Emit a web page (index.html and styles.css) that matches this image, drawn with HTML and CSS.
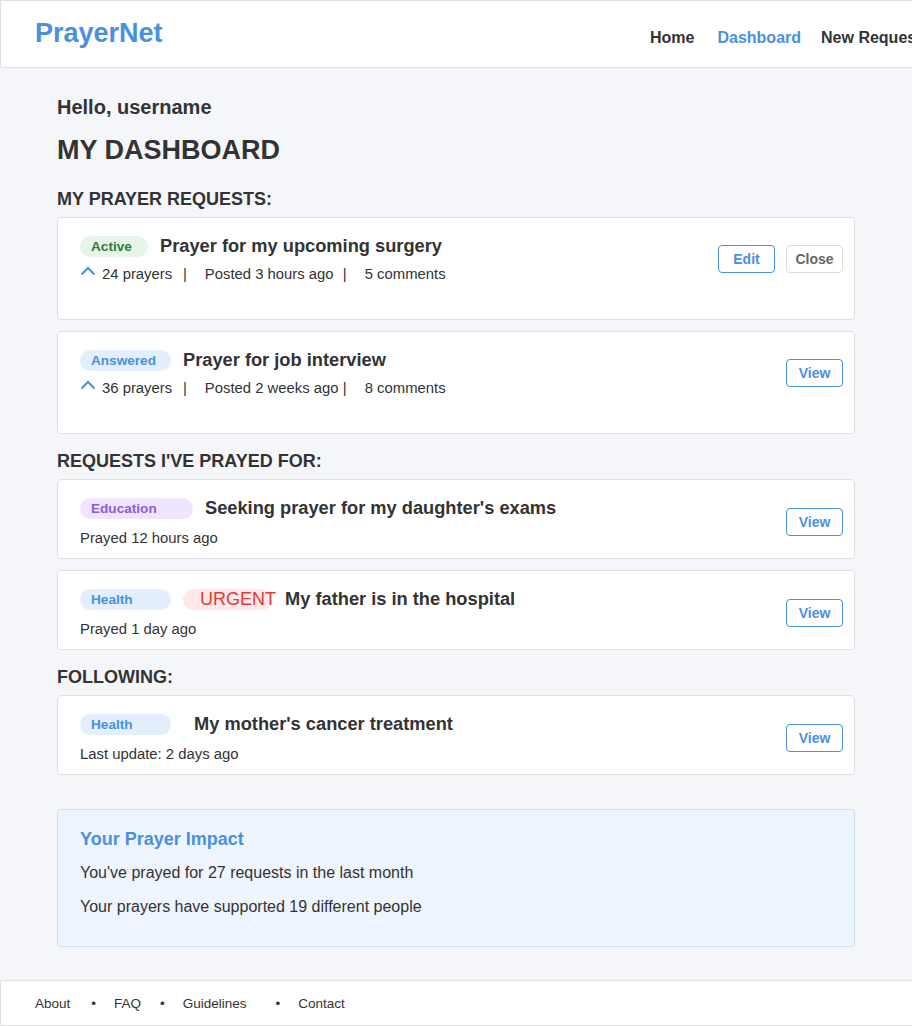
FILE: index.html
```html
<!DOCTYPE html>
<html lang="en">
<head>
<meta charset="utf-8">
<title>PrayerNet - Dashboard</title>
<link rel="stylesheet" href="styles.css">
</head>
<body>
<header class="site-header">
  <div class="logo">PrayerNet</div>
  <nav class="nav">
    <a class="nav-link" href="#">Home</a>
    <a class="nav-link nav-active" href="#">Dashboard</a>
    <a class="nav-link" href="#">New Request</a>
    <a class="nav-link" href="#">Browse</a>
    <a class="nav-link" href="#">Logout</a>
  </nav>
</header>

<main class="container">
  <h2 class="greeting">Hello, username</h2>
  <h1 class="page-title">MY DASHBOARD</h1>

  <h3 class="section-title first">MY PRAYER REQUESTS:</h3>
  <div class="card card-tall">
    <div class="card-info">
      <div class="title-row">
        <span class="badge badge-active">Active</span>
        <span class="card-title">Prayer for my upcoming surgery</span>
      </div>
      <div class="meta">
        <span class="seg seg-first"><svg class="chev" width="16" height="10" viewBox="0 0 16 10"><polyline points="1.5,8.5 8,2 14.5,8.5" fill="none" stroke="#4a90e2" stroke-width="2"/></svg>24 prayers</span>
        <span class="sep">|</span>
        <span class="seg seg-second">Posted 3 hours ago</span>
        <span class="sep">|</span>
        <span class="seg">5 comments</span>
      </div>
    </div>
    <div class="actions">
      <button class="btn btn-primary">Edit</button>
      <button class="btn btn-muted">Close</button>
    </div>
  </div>

  <div class="card card-tall">
    <div class="card-info">
      <div class="title-row">
        <span class="badge badge-answered">Answered</span>
        <span class="card-title">Prayer for job interview</span>
      </div>
      <div class="meta">
        <span class="seg seg-first"><svg class="chev" width="16" height="10" viewBox="0 0 16 10"><polyline points="1.5,8.5 8,2 14.5,8.5" fill="none" stroke="#4a90e2" stroke-width="2"/></svg>36 prayers</span>
        <span class="sep">|</span>
        <span class="seg seg-second">Posted 2 weeks ago</span>
        <span class="sep">|</span>
        <span class="seg">8 comments</span>
      </div>
    </div>
    <div class="actions">
      <button class="btn btn-primary">View</button>
    </div>
  </div>

  <h3 class="section-title">REQUESTS I'VE PRAYED FOR:</h3>
  <div class="card">
    <div class="card-info">
      <div class="title-row">
        <span class="badge badge-education">Education</span>
        <span class="card-title">Seeking prayer for my daughter's exams</span>
      </div>
      <div class="meta meta-plain">Prayed 12 hours ago</div>
    </div>
    <div class="actions">
      <button class="btn btn-primary">View</button>
    </div>
  </div>

  <div class="card">
    <div class="card-info">
      <div class="title-row">
        <span class="badge badge-health">Health</span>
        <span class="badge badge-urgent">URGENT</span>
        <span class="card-title title-after-urgent">My father is in the hospital</span>
      </div>
      <div class="meta meta-plain">Prayed 1 day ago</div>
    </div>
    <div class="actions">
      <button class="btn btn-primary">View</button>
    </div>
  </div>

  <h3 class="section-title">FOLLOWING:</h3>
  <div class="card">
    <div class="card-info">
      <div class="title-row">
        <span class="badge badge-health">Health</span>
        <span class="card-title title-wide-gap">My mother's cancer treatment</span>
      </div>
      <div class="meta meta-plain">Last update: 2 days ago</div>
    </div>
    <div class="actions">
      <button class="btn btn-primary">View</button>
    </div>
  </div>

  <section class="impact">
    <h4 class="impact-title">Your Prayer Impact</h4>
    <p class="impact-line">You've prayed for 27 requests in the last month</p>
    <p class="impact-line">Your prayers have supported 19 different people</p>
  </section>
</main>

<footer class="site-footer">
  <a class="foot-link foot-about" href="#">About</a>
  <span class="dot">•</span>
  <a class="foot-link" href="#">FAQ</a>
  <span class="dot">•</span>
  <a class="foot-link foot-guidelines" href="#">Guidelines</a>
  <span class="dot">•</span>
  <a class="foot-link" href="#">Contact</a>
</footer>
</body>
</html>
```

FILE: styles.css
```css
* { box-sizing: border-box; }

html, body {
  margin: 0;
  padding: 0;
  overflow-x: hidden;
}

body {
  background: #f5f6fa;
  color: #333333;
  font-family: "Liberation Sans", Arial, sans-serif;
}

a { text-decoration: none; }

/* Header */
.site-header {
  display: flex;
  align-items: center;
  height: 68px;
  background: #ffffff;
  border: 1px solid #e0e0e0;
  border-right: none;
  padding-left: 34px;
  overflow: hidden;
  white-space: nowrap;
}

.logo {
  flex: 0 0 615px;
  font-size: 27px;
  font-weight: bold;
  color: #4a90e2;
  margin-top: -1px;
}

.nav {
  display: flex;
  flex: 0 0 auto;
  padding-top: 7px;
}

.nav-link {
  font-size: 16px;
  font-weight: bold;
  color: #333333;
  margin-right: 23px;
}

.nav-link.nav-active {
  color: #4a90e2;
  margin-right: 20px;
}

/* Main */
.container {
  width: 798px;
  margin: 0 auto;
  padding-top: 27px;
}

.greeting {
  margin: 0;
  font-size: 20px;
  line-height: 24px;
  font-weight: bold;
}

.page-title {
  margin: 15px 0 0;
  font-size: 27px;
  line-height: 32px;
  font-weight: bold;
}

.section-title {
  margin: 17px 0 8px;
  font-size: 18px;
  line-height: 20px;
  font-weight: bold;
}

.section-title.first {
  margin-top: 23px;
}

/* Cards */
.card {
  display: flex;
  align-items: center;
  background: #ffffff;
  border: 1px solid #e0e0e0;
  border-radius: 4px;
  padding: 17px 11px 10px 22px;
  margin-bottom: 11px;
}

.card.card-tall {
  padding-bottom: 35px;
}

.card-info {
  flex: 1 1 auto;
}

.title-row {
  display: flex;
  align-items: center;
  height: 22px;
  white-space: nowrap;
}

.card-title {
  font-size: 18.25px;
  line-height: 22px;
  font-weight: bold;
  margin-left: 12px;
  color: #333333;
}

.card-title.title-after-urgent { margin-left: 13px; }
.card-title.title-wide-gap { margin-left: 23px; }

.badge {
  display: inline-block;
  height: 21px;
  line-height: 21px;
  border-radius: 11px;
  padding-left: 11px;
  font-size: 13.6px;
  font-weight: bold;
  white-space: nowrap;
}

.badge-active { width: 68px; background: #e6f4ea; color: #2e7d32; }
.badge-answered { width: 91px; background: #e3effd; color: #4a90e2; }
.badge-education { width: 113px; background: #efe5fd; color: #8e5bd6; }
.badge-health { width: 91px; background: #e3effd; color: #4a90e2; }

.badge-urgent {
  width: 89px;
  margin-left: 12px;
  background: #fde9e9;
  color: #e53935;
  font-size: 18px;
  font-weight: normal;
  padding-left: 17px;
  overflow: visible;
}

.meta {
  display: flex;
  align-items: center;
  margin-top: 7px;
  height: 20px;
  font-size: 14.85px;
  line-height: 20px;
  color: #333333;
  white-space: nowrap;
}

.meta.meta-plain {
  display: block;
  margin-top: 9px;
}

.seg-first {
  display: inline-flex;
  align-items: center;
  min-width: 101px;
}

.seg-second {
  min-width: 136px;
}

.chev {
  margin-right: 6px;
  margin-top: -6px;
}

.sep {
  margin: 0 18px 0 2px;
}

/* Buttons */
.actions {
  display: flex;
  gap: 11px;
  flex: 0 0 auto;
  margin-top: -2px;
}

.btn {
  width: 57px;
  height: 28px;
  padding: 0;
  background: #ffffff;
  border-radius: 4px;
  font-family: "Liberation Sans", Arial, sans-serif;
  font-size: 14px;
  font-weight: bold;
  cursor: pointer;
}

.btn-primary {
  border: 1px solid #4a90e2;
  color: #4a90e2;
}

.btn-muted {
  border: 1px solid #dddddd;
  color: #666666;
}

/* Impact */
.impact {
  margin-top: 34px;
  background: #eef5fe;
  border: 1px solid #cde0f7;
  border-radius: 4px;
  padding: 18px 22px 29px;
}

.impact-title {
  margin: 0;
  font-size: 18px;
  line-height: 22px;
  font-weight: bold;
  color: #4a90e2;
}

.impact-line {
  margin: 13px 0 0;
  font-size: 16px;
  line-height: 20px;
}

.impact-line + .impact-line {
  margin-top: 14px;
}

/* Footer */
.site-footer {
  display: flex;
  align-items: center;
  margin-top: 33px;
  height: 46px;
  background: #ffffff;
  border: 1px solid #e0e0e0;
  border-right: none;
  padding-left: 34px;
  font-size: 13.5px;
}

.foot-link {
  color: #333333;
}

.foot-about { margin-right: 3px; }
.foot-guidelines { margin-right: 11px; }

.dot {
  margin: 0 18px;
  color: #333333;
}

.dot:nth-of-type(2) {
  margin-left: 19px;
}
```
